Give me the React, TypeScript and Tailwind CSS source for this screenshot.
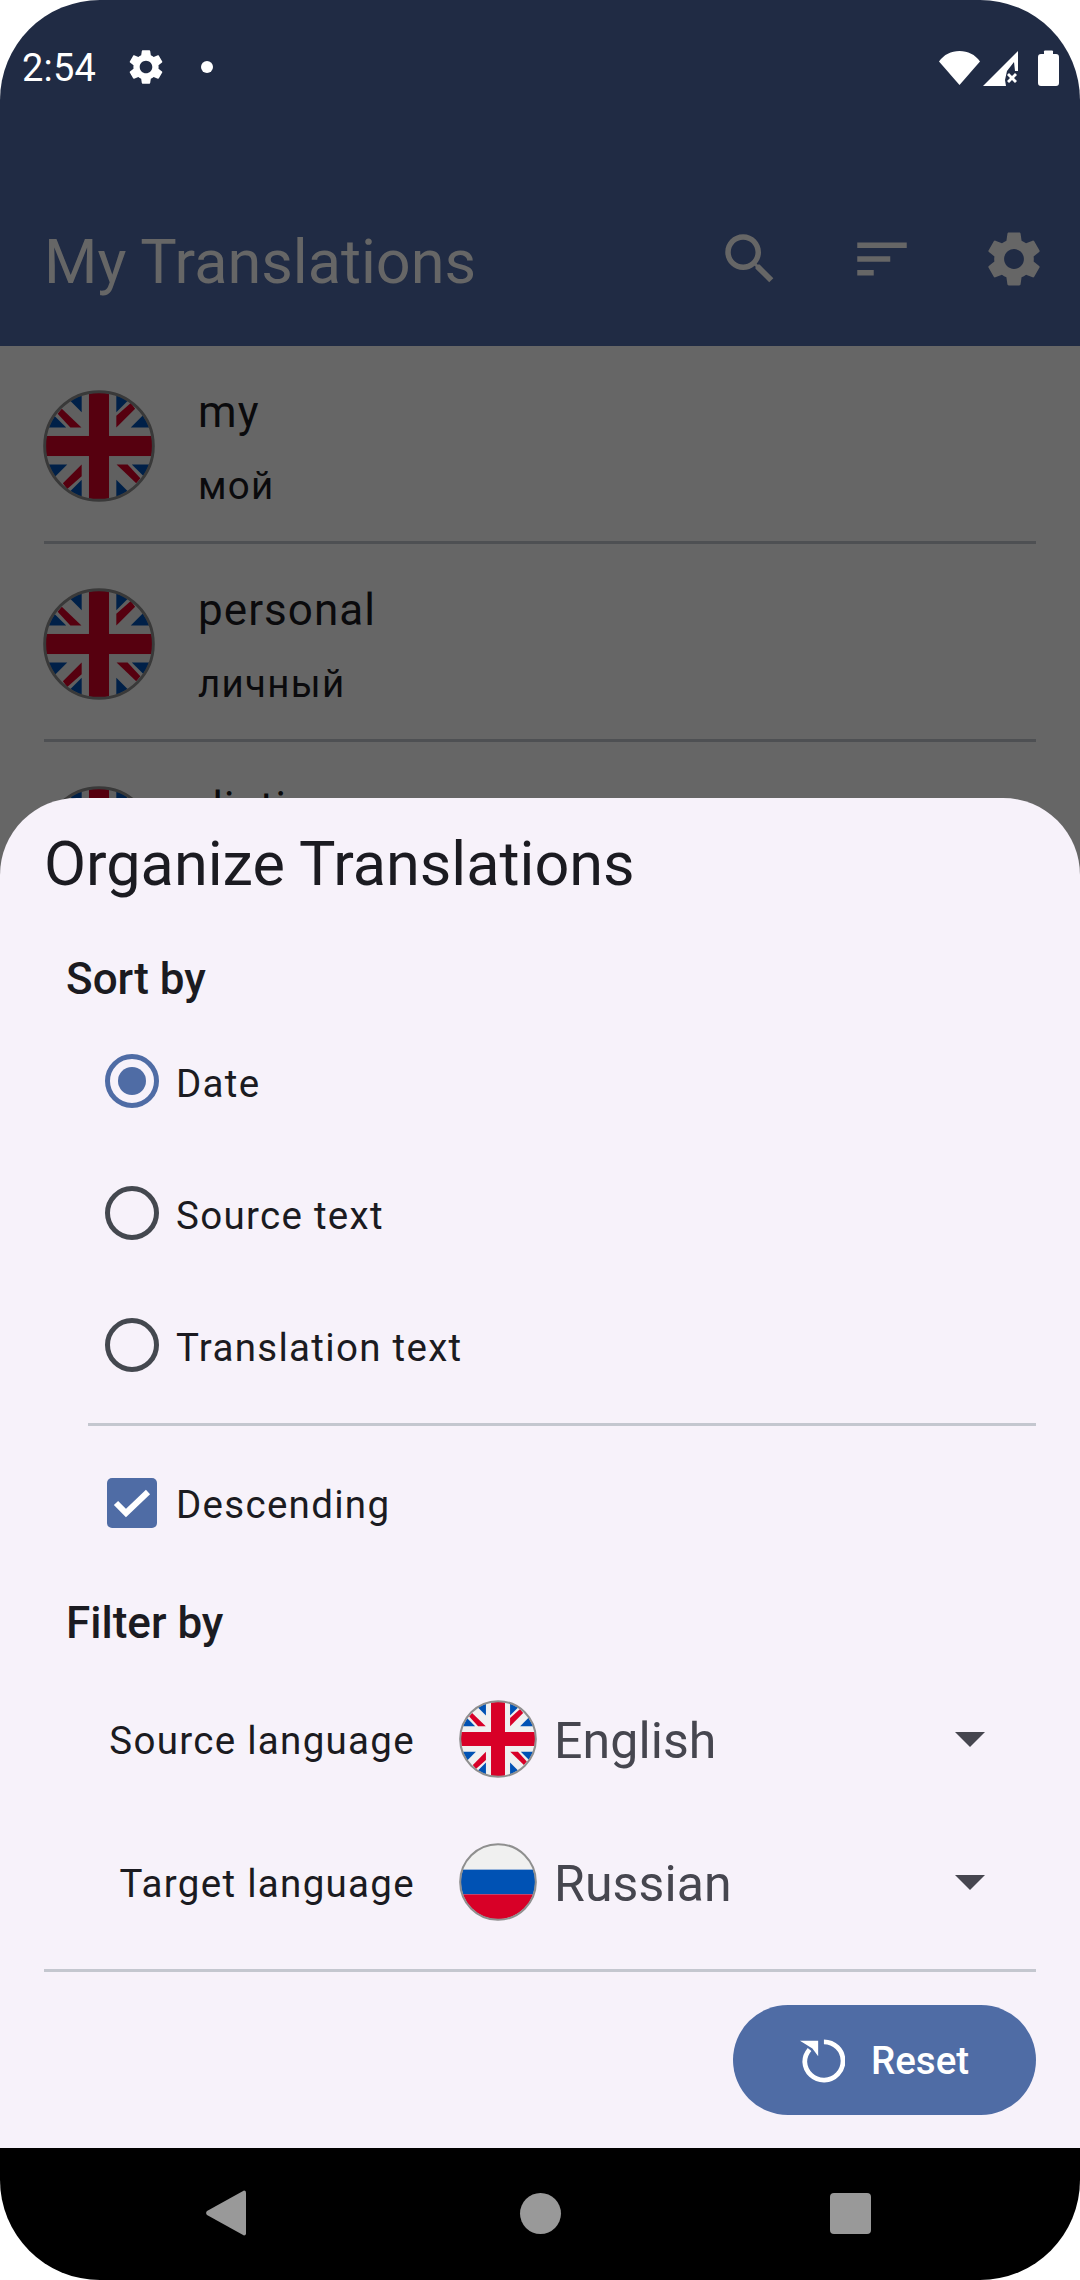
import React from "react";

const GEAR = "M19.14 12.94c.04-.3.06-.61.06-.94 0-.32-.02-.64-.07-.94l2.03-1.58c.18-.14.23-.41.12-.61l-1.92-3.32c-.12-.22-.37-.29-.59-.22l-2.39.96c-.5-.38-1.03-.7-1.62-.94l-.36-2.54c-.04-.24-.24-.41-.48-.41h-3.84c-.24 0-.43.17-.47.41l-.36 2.54c-.59.24-1.13.57-1.62.94l-2.39-.96c-.22-.08-.47 0-.59.22L2.74 8.87c-.12.21-.08.47.12.61l2.03 1.58c-.05.3-.09.63-.09.94s.02.64.07.94l-2.03 1.58c-.18.14-.23.41-.12.61l1.92 3.32c.12.22.37.29.59.22l2.39-.96c.5.38 1.03.7 1.62.94l.36 2.54c.05.24.24.41.48.41h3.84c.24 0 .44-.17.47-.41l.36-2.54c.59-.24 1.13-.56 1.62-.94l2.39.96c.22.08.47 0 .59-.22l1.92-3.32c.12-.22.07-.47-.12-.61l-2.01-1.58zM12 15.6c-1.98 0-3.6-1.62-3.6-3.6s1.62-3.6 3.6-3.6 3.6 1.62 3.6 3.6-1.62 3.6-3.6 3.6z";

function Icon({ d, className }: { d: string; className: string }) {
  return (
    <svg viewBox="0 0 24 24" fill="currentColor" className={className}>
      <path d={d} />
    </svg>
  );
}

function UkQuarter({ flip }: { flip?: boolean }) {
  return (
    <g transform={flip ? "rotate(180 256 256)" : undefined}>
      <polygon points="339,-44 339,94 477,-44" fill="#0052b4" />
      <polygon points="408,168 556,168 556,20" fill="#0052b4" />
      <polygon points="173,94 173,-44 35,-44" fill="#0052b4" />
      <polygon points="99,168 -44,168 -44,25" fill="#0052b4" />
      <polygon points="339,168 339,111 408,50 429,78" fill="#d80027" />
      <polygon points="172,168 119,168 58,102 78,78" fill="#d80027" />
    </g>
  );
}

function UkFlag({ className, id }: { className: string; id: string }) {
  return (
    <svg viewBox="-12 -12 536 536" className={className}>
      <defs>
        <clipPath id={id}>
          <circle cx="256" cy="256" r="256" />
        </clipPath>
      </defs>
      <g clipPath={`url(#${id})`}>
        <rect x="0" y="0" width="512" height="512" fill="#f0f0f0" />
        <UkQuarter />
        <UkQuarter flip />
        <rect x="208" y="0" width="96" height="512" fill="#d80027" />
        <rect x="0" y="208" width="512" height="96" fill="#d80027" />
      </g>
      <circle cx="256" cy="256" r="260" fill="none" stroke="#8f8f8f" strokeWidth="14" />
    </svg>
  );
}

function RuFlag({ className }: { className: string }) {
  return (
    <svg viewBox="-12 -12 536 536" className={className}>
      <defs>
        <clipPath id="ru-clip">
          <circle cx="256" cy="256" r="256" />
        </clipPath>
      </defs>
      <g clipPath="url(#ru-clip)">
        <rect x="0" y="0" width="512" height="171" fill="#f0f0f0" />
        <rect x="0" y="171" width="512" height="170" fill="#0052b4" />
        <rect x="0" y="341" width="512" height="171" fill="#d80027" />
      </g>
      <circle cx="256" cy="256" r="260" fill="none" stroke="#8f8f8f" strokeWidth="14" />
    </svg>
  );
}

function ListRow({ source, target, id }: { source: string; target: string; id: string }) {
  return (
    <div className="mx-[44px] h-[198px] border-b-[3px] border-[#c4c7cf] flex items-start">
      <UkFlag id={id} className="w-[112px] h-[112px] mt-[44px] -ml-[1px] shrink-0" />
      <div className="ml-[43px] flex flex-col text-[#1b1b21]">
        <span className="text-[44px] leading-[60px] tracking-[1.05px] mt-[36px]">{source}</span>
        <span className="text-[38.5px] leading-[52px] tracking-[1.3px] mt-[18px]">{target}</span>
      </div>
    </div>
  );
}

function Radio({ label, checked }: { label: string; checked?: boolean }) {
  return (
    <div className="h-[132px] flex items-center pl-[105px]">
      <div
        className={
          checked
            ? "w-[54px] h-[54px] rounded-full border-[5px] border-[#4f6ca5] flex items-center justify-center"
            : "w-[54px] h-[54px] rounded-full border-[5px] border-[#44484f] flex items-center justify-center"
        }
      >
        {checked ? <div className="w-[28px] h-[28px] rounded-full bg-[#4f6ca5]" /> : null}
      </div>
      <span className="ml-[17px] mt-[5px] text-[38.5px] leading-[52px] tracking-[1.3px] text-[#1b1b21]">{label}</span>
    </div>
  );
}

function LangRow({ label, lang, flag }: { label: string; lang: string; flag: React.ReactNode }) {
  return (
    <div className="h-[143px] flex items-center">
      <span className="w-[415px] mt-[2px] text-right text-[38.5px] leading-[52px] tracking-[1.3px] text-[#1b1b21]">{label}</span>
      <div className="ml-[44px] -mt-[2px] shrink-0 flex">{flag}</div>
      <span className="ml-[17px] mt-[3px] text-[50px] leading-[66px] tracking-[0.1px] text-[#46464f]">{lang}</span>
      <div className="ml-auto mr-[95px] w-0 h-0 border-x-[15px] border-x-transparent border-t-[15px] border-t-[#46464f]" />
    </div>
  );
}

export default function App() {
  return (
    <div className="w-[1080px] h-[2280px] bg-white">
      <div className="relative w-[1080px] h-[2280px] rounded-[100px] overflow-hidden flex flex-col font-['Roboto',sans-serif]">
        <header className="h-[346px] bg-[#202b44] flex flex-col shrink-0">
          <div className="h-[134px] flex items-center text-white pl-[22px] pr-[21px]">
            <span className="text-[38px] leading-[44px] tracking-[0.2px] mt-[2px]">2:54</span>
            <Icon d={GEAR} className="w-[42px] h-[42px] ml-[29px]" />
            <div className="w-[12px] h-[12px] rounded-full bg-white ml-[34px]" />
            <div className="ml-auto flex items-center mt-[2px]">
              <svg viewBox="0 0 41 34" className="w-[41px] h-[34px]" fill="currentColor">
                <path d="M0 10.500C5 3.500 12 0 20.500 0S36 3.500 41 10.500L20.500 34z" />
              </svg>
              <svg viewBox="0 0 35 35" className="w-[35px] h-[35px] ml-[3px]" fill="currentColor">
                <path d="M35 0v20h-3l-1-9-7 9-2 9 1 6H0z" />
                <path d="M24 24l2-2 3 3 3-3 2 2-3 3 3 3-2 2-3-3-3 3-2-2 3-3z" />
              </svg>
              <svg viewBox="0 0 21 36" className="w-[21px] h-[36px] ml-[20px]" fill="currentColor">
                <path d="M6 2a1 1 0 0 1 1-1.500h7a1 1 0 0 1 1 1.500v2h3a3 3 0 0 1 3 3v26a3 3 0 0 1-3 3H3a3 3 0 0 1-3-3V7a3 3 0 0 1 3-3h3z" />
              </svg>
            </div>
          </div>
          <div className="flex-1 flex items-center pl-[44px] text-[#666666]">
            <span className="text-[61.2px] leading-[80px] mt-[44px]">My Translations</span>
            <div className="ml-auto flex mt-[38px]">
              <div className="w-[132px] flex justify-center">
                <Icon d="M15.5 14h-.79l-.28-.27C15.41 12.59 16 11.11 16 9.5 16 5.91 13.09 3 9.5 3S3 5.91 3 9.5 5.91 16 9.5 16c1.61 0 3.09-.59 4.23-1.57l.27.28v.79l5 4.99L20.49 19l-4.99-5zm-6 0C7.01 14 5 11.99 5 9.5S7.010 5 9.5 5 14 7.010 14 9.5 11.990 14 9.500 14z" className="w-[66px] h-[66px]" />
              </div>
              <div className="w-[132px] flex justify-center">
                <Icon d="M3 18h6v-2H3v2zM3 6v2h18V6H3zm0 7h12v-2H3v2z" className="w-[66px] h-[66px]" />
              </div>
              <div className="w-[132px] flex justify-center">
                <Icon d={GEAR} className="w-[66px] h-[66px]" />
              </div>
            </div>
          </div>
        </header>

        <main className="relative flex-1 overflow-hidden bg-white">
          <ListRow id="uk-list-1" source="my" target="мой" />
          <ListRow id="uk-list-2" source="personal" target="личный" />
          <ListRow id="uk-list-3" source="dictionary" target="словарь" />
          <div className="absolute inset-0 bg-black/60" />
        </main>

        <nav className="h-[132px] bg-black shrink-0 flex items-center relative z-10">
          <svg viewBox="0 0 40 46" className="w-[40px] h-[46px] ml-[206px] -mt-[2px]" fill="#999999">
            <path d="M38 0.500a2 2 0 0 1 2 2v41a2 2 0 0 1-2 2L1 25a3 3 0 0 1 0-4z" />
          </svg>
          <div className="w-[41px] h-[41px] rounded-full bg-[#999999] ml-[274px] -mt-[2px]" />
          <div className="w-[41px] h-[41px] rounded-[4px] bg-[#999999] ml-[269px] -mt-[2px]" />
        </nav>

        <section className="absolute left-0 right-0 top-[798px] h-[1350px] z-10 bg-[#f7f2fa] rounded-t-[77px] pt-[28px]">
          <h1 className="pl-[44px] mt-[1px] text-[61.2px] leading-[74px] font-normal text-[#1b1b21]">Organize Translations</h1>
          <h2 className="pl-[66px] mt-[52px] text-[44px] leading-[52px] font-medium text-[#1b1b21]">Sort by</h2>
          <div className="mt-[10px]">
            <Radio label="Date" checked />
            <Radio label="Source text" />
            <Radio label="Translation text" />
          </div>
          <div className="ml-[88px] mr-[44px] mt-[12px] h-[3px] bg-[#c4c7cf]" />
          <div className="mt-[33px] h-[88px] flex items-center pl-[107px]">
            <div className="w-[50px] h-[50px] rounded-[5px] bg-[#4f6ca5] flex items-center justify-center">
              <svg viewBox="0 0 50 50" className="w-[50px] h-[50px]" fill="none" stroke="white" strokeWidth="6">
                <path d="M9 25l10 10 22-21" />
              </svg>
            </div>
            <span className="ml-[19px] mt-[3px] text-[38.5px] leading-[52px] tracking-[1.3px] text-[#1b1b21]">Descending</span>
          </div>
          <h2 className="pl-[66px] mt-[50px] text-[44px] leading-[52px] font-medium text-[#1b1b21]">Filter by</h2>
          <div className="mt-[19px]">
            <LangRow label="Source language" lang="English" flag={<UkFlag id="uk-source" className="w-[78px] h-[78px]" />} />
            <LangRow label="Target language" lang="Russian" flag={<RuFlag className="w-[78px] h-[78px]" />} />
          </div>
          <div className="mx-[44px] mt-[15px] h-[3px] bg-[#c4c7cf]" />
          <div className="mt-[33px] flex justify-end pr-[44px]">
            <button className="w-[303px] h-[110px] rounded-full bg-[#4f6ca5] text-white flex items-center pl-[66px]">
              <svg viewBox="0 0 48 48" className="w-[46px] h-[46px]" fill="none" stroke="currentColor" strokeWidth="5">
                <path d="M26 5a20 20 0 1 1-20 21c0-5 1.500-9 5-13" />
                <path d="M1 4h19v16l-6-8z" fill="currentColor" stroke="none" />
              </svg>
              <span className="ml-[26px] mt-[2px] text-[38.5px] leading-[52px] font-medium">Reset</span>
            </button>
          </div>
        </section>
      </div>
    </div>
  );
}
